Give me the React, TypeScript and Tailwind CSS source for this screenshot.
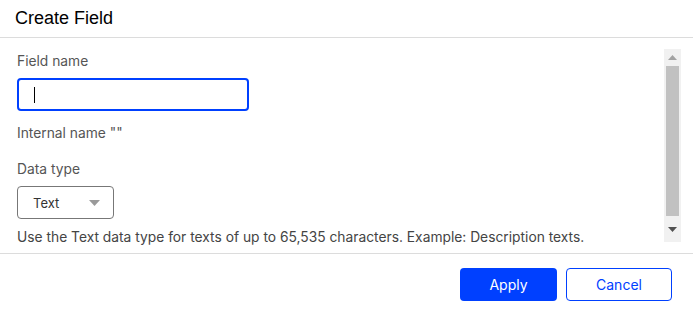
export default function App() {
  return (
    <div className="w-[693px] h-[315px] bg-white flex flex-col font-['Inter',sans-serif] text-[#444]">
      {/* Header */}
      <div className="h-[38px] border-b border-[#dcdcdc] flex items-center px-[15px]">
        <h1 className="font-['Liberation_Sans',Arial,sans-serif] text-[18px] text-black leading-none -mt-[1px]">
          Create Field
        </h1>
      </div>

      {/* Body */}
      <div className="h-[216px] flex border-b border-[#dcdcdc]">
        <div className="flex-1 pl-[17px] pt-[13px] text-[13.8px] leading-[20px]">
          <label className="block text-[#555]">Field name</label>
          <div className="mt-[7px] w-[232px] h-[33px] border-2 border-[#0040ff] rounded-[4px] flex items-center pl-[15px]">
            <span className="w-px h-[16px] bg-black" />
          </div>
          <p className="mt-[12px] text-[#555]">Internal name "&#8203;"</p>
          <label className="block mt-[16px] text-[#555]">Data type</label>
          <div className="mt-[7px] w-[97px] h-[33px] border border-[#777] rounded-[4px] flex items-center justify-between pl-[15px] pr-[13px]">
            <span className="text-[13px] text-[#333]">Text</span>
            <svg width="11" height="6" viewBox="0 0 11 6">
              <path d="M0 0h11L5.5 6z" fill="#9a9a9a" />
            </svg>
          </div>
          <p className="mt-[8px] text-[#444]">
            Use the Text data type for texts of up to 65,535 characters. Example: Description texts.
          </p>
        </div>

        {/* Scrollbar */}
        <div className="w-[17px] mt-[11px] mb-[11px] mr-[12px] bg-[#f1f1f1] flex flex-col items-center">
          <div className="h-[17px] flex items-center justify-center">
            <svg width="9" height="5" viewBox="0 0 9 5">
              <path d="M4.5 0L9 5H0z" fill="#a3a3a3" />
            </svg>
          </div>
          <div className="w-[13px] h-[150px] bg-[#c1c1c1]" />
          <div className="flex-1 flex items-center justify-center">
            <svg width="9" height="5" viewBox="0 0 9 5">
              <path d="M0 0h9L4.5 5z" fill="#505050" />
            </svg>
          </div>
        </div>
      </div>

      {/* Footer */}
      <div className="flex-1 flex items-start justify-end gap-[9px] pt-[14px] pr-[21px]">
        <button className="w-[97px] h-[33px] rounded-[4px] bg-[#0040ff] text-white text-[14px]">
          Apply
        </button>
        <button className="w-[106px] h-[33px] rounded-[4px] border border-[#0040ff] bg-white text-[#0040ff] text-[14px]">
          Cancel
        </button>
      </div>
    </div>
  );
}
